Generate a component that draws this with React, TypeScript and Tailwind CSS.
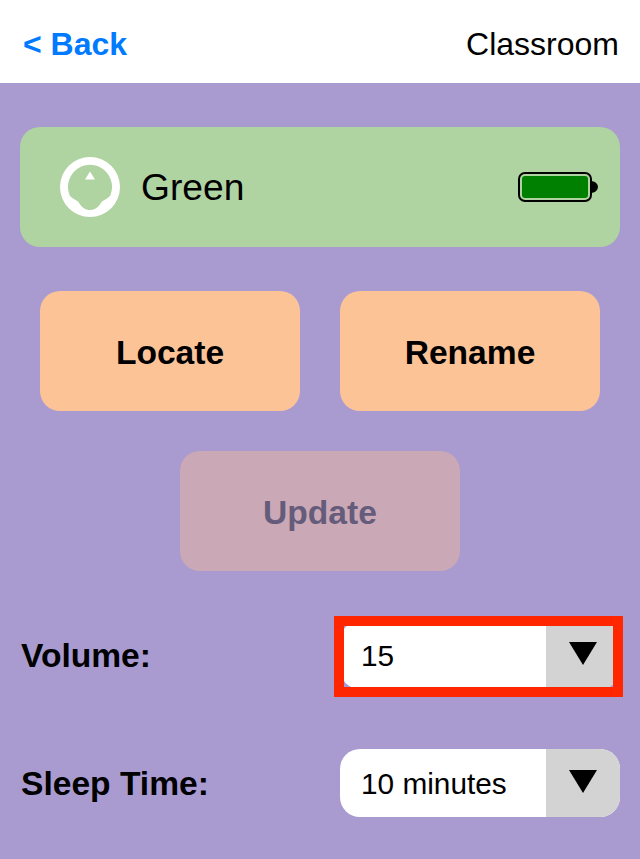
export default function App() {
  const Arrow = () => (
    <svg width="30" height="26" viewBox="0 0 30 26" className="block">
      <polygon points="1,2 29,2 15,25" fill="#000" />
    </svg>
  );
  const Select = ({ label }: { label: string }) => (
    <div className="w-[280px] h-[68px] rounded-[20px] bg-white overflow-hidden flex">
      <div className="flex-1 pl-[21px] pt-[2px] flex items-center text-[29.8px] text-black">{label}</div>
      <div className="w-[74px] bg-[#d3d3d3] flex items-center justify-center pb-[4px]">
        <Arrow />
      </div>
    </div>
  );
  return (
    <div className="w-[640px] h-[859px] overflow-hidden bg-[#a99bd0] font-['Liberation_Sans',Arial,sans-serif] flex flex-col">
      <header className="h-[83px] bg-white flex items-center justify-between pl-[23px] pr-[21px] pt-[5px]">
        <span className="text-[32px] font-bold text-[#007aff]">&lt; Back</span>
        <span className="text-[32px] text-black">Classroom</span>
      </header>
      <main className="relative flex-1 px-[20px] pt-[44px]">
        <section className="h-[120px] rounded-[20px] bg-[#b0d3a2] flex items-center pl-[40px] pr-[22px]">
          <svg width="60" height="60" viewBox="0 0 60 60" className="block">
            <path
              fillRule="evenodd"
              fill="#fff"
              d="M30 0a30 30 0 1 1 0 60a30 30 0 1 1 0-60ZM10 39A22 22 0 1 1 50 39C47.500 42 44 42.500 41.500 45C38.500 50.500 34.500 53 30 53S21.500 50.500 18.500 45C16 42.500 12.500 42 10 39Z"
            />
            <polygon points="30,14.500 35,22.500 25,22.500" fill="#fff" />
          </svg>
          <span className="ml-[21px] pt-[2px] text-[37.2px] text-black flex-1">Green</span>
          <svg width="80" height="30" viewBox="0 0 80 30" className="block">
            <rect x="1" y="1" width="72" height="28" rx="6" fill="none" stroke="#000" strokeWidth="2" />
            <rect x="4" y="4" width="66" height="22" rx="3" fill="#008000" />
            <path d="M73 9a7 6 0 0 1 0 12Z" fill="#000" />
          </svg>
        </section>
        <div className="mt-[44px] px-[20px] flex gap-[40px]">
          <button className="w-[260px] h-[120px] pt-[4px] rounded-[20px] bg-[#fcc396] text-[33.6px] font-bold text-black">Locate</button>
          <button className="w-[260px] h-[120px] pt-[4px] rounded-[20px] bg-[#fcc396] text-[33.6px] font-bold text-black">Rename</button>
        </div>
        <div className="mt-[40px] flex justify-center">
          <button className="w-[280px] h-[120px] pt-[4px] rounded-[20px] bg-[#cba8b5] text-[33.6px] font-bold text-[#655c7c]">Update</button>
        </div>
        <div className="mt-[50px] flex items-center justify-between">
          <span className="ml-[1px] pt-[2px] text-[33.6px] font-bold text-black">Volume:</span>
          <Select label="15" />
        </div>
        <div className="mt-[60px] flex items-center justify-between">
          <span className="ml-[1px] pt-[2px] text-[33.6px] font-bold text-black">Sleep Time:</span>
          <Select label="10 minutes" />
        </div>
        <div className="absolute left-[334px] top-[533px] w-[289px] h-[81px] border-[10px] border-[#ff2600]" />
      </main>
    </div>
  );
}
